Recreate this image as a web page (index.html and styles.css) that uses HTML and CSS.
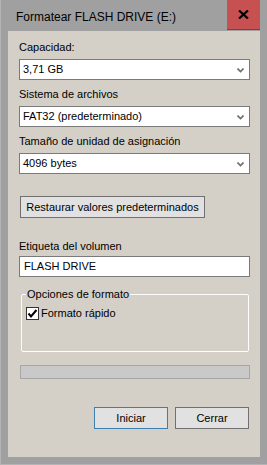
FILE: index.html
```html
<!DOCTYPE html>
<html lang="es">
<head>
<meta charset="utf-8">
<title>Formatear FLASH DRIVE (E:)</title>
<link rel="stylesheet" href="styles.css">
</head>
<body>
<div class="window">
  <div class="titlebar">
    <span class="title">Formatear FLASH DRIVE (E:)</span>
    <span class="close">
      <svg width="11" height="9" viewBox="0 0 11 9"><path d="M1 0.5 L10 8.5 M10 0.5 L1 8.5" stroke="#000" stroke-width="2.2"/></svg>
    </span>
  </div>
  <div class="content">
    <div class="row">
      <div class="label">Capacidad:</div>
      <div class="select"><span>3,71 GB</span><svg class="chev" width="7" height="5" viewBox="0 0 7 5"><path d="M0.5 0.5 L3.5 3.5 L6.5 0.5" fill="none" stroke="#6d6d6d" stroke-width="1.6"/></svg></div>
    </div>
    <div class="row">
      <div class="label">Sistema de archivos</div>
      <div class="select"><span>FAT32 (predeterminado)</span><svg class="chev" width="7" height="5" viewBox="0 0 7 5"><path d="M0.5 0.5 L3.5 3.5 L6.5 0.5" fill="none" stroke="#6d6d6d" stroke-width="1.6"/></svg></div>
    </div>
    <div class="row">
      <div class="label">Tamaño de unidad de asignación</div>
      <div class="select"><span>4096 bytes</span><svg class="chev" width="7" height="5" viewBox="0 0 7 5"><path d="M0.5 0.5 L3.5 3.5 L6.5 0.5" fill="none" stroke="#6d6d6d" stroke-width="1.6"/></svg></div>
    </div>
    <div class="btn restore">Restaurar valores predeterminados</div>
    <div class="label vol">Etiqueta del volumen</div>
    <div class="input">FLASH DRIVE</div>
    <fieldset class="group">
      <legend>Opciones de formato</legend>
      <div class="check">
        <span class="box"><svg width="11" height="11" viewBox="0 0 11 11"><path d="M1.5 5.5 L4 8.5 L9.5 2" fill="none" stroke="#000" stroke-width="2"/></svg></span>
        <span>Formato rápido</span>
      </div>
    </fieldset>
    <div class="progress"></div>
    <div class="actions">
      <div class="btn act default">Iniciar</div>
      <div class="btn act">Cerrar</div>
    </div>
  </div>
</div>
</body>
</html>
```
FILE: styles.css
```css
html, body {
  margin: 0;
  padding: 0;
  background: #a0a0a0;
}
.window {
  width: 267px;
  height: 465px;
  box-sizing: border-box;
  background: #a0a0a0;
  border-left: 1px solid #b4b4b4;
  border-bottom: 1px solid #b4b4b4;
  font-family: "Liberation Sans", Arial, sans-serif;
  font-size: 11px;
  color: #000;
}
.titlebar {
  height: 31px;
  display: flex;
  align-items: flex-start;
  justify-content: space-between;
}
.title {
  font-size: 12px;
  line-height: 16px;
  margin: 9px 0 0 15px;
  color: #000;
}
.close {
  width: 33px;
  height: 29px;
  margin-right: 7px;
  background: #c75050;
  border-bottom: 1px solid #8a3a3a;
  display: flex;
  align-items: center;
  justify-content: center;
}
.content {
  margin: 0 7px 0 7px;
  height: 426px;
  background: #d4d0c8;
  padding: 10px 10px 0 11px;
  box-sizing: border-box;
  display: flex;
  flex-direction: column;
}
.label {
  line-height: 13px;
  height: 13px;
  white-space: nowrap;
}
.row {
  display: flex;
  flex-direction: column;
  gap: 5px;
  margin-bottom: 8px;
}
.select, .input {
  height: 21px;
  box-sizing: border-box;
  background: #fff;
  border: 1px solid #7a7a7a;
  display: flex;
  align-items: center;
  justify-content: space-between;
  padding: 0 5px 0 3px;
  line-height: 13px;
}
.chev {
  margin-top: 1px;
}
.btn {
  box-sizing: border-box;
  height: 22px;
  background: #e1e1e1;
  border: 1px solid #707070;
  display: flex;
  align-items: center;
  justify-content: center;
  line-height: 13px;
  white-space: nowrap;
}
.restore {
  width: 185px;
  margin: 14px 0 0 1px;
}
.vol {
  margin-top: 22px;
}
.input {
  margin-top: 3px;
  height: 21px;
  padding-left: 4px;
}
.group {
  margin: 11px 1px 0 2px;
  padding: 0 6px 0 4px;
  height: 64px;
  box-sizing: border-box;
  border: 1px solid #fdfdfd;
  border-radius: 2px;
}
.group legend {
  padding: 0 1px;
  line-height: 13px;
}
.check {
  display: flex;
  align-items: center;
  gap: 2px;
  margin-top: 6px;
  line-height: 13px;
}
.box {
  width: 13px;
  height: 13px;
  box-sizing: border-box;
  border: 1px solid #333;
  background: #fff;
  display: flex;
  align-items: center;
  justify-content: center;
}
.progress {
  margin: 13px 0 0 1px;
  height: 14px;
  box-sizing: border-box;
  background: #c9c9c9;
  border: 1px solid #a6a6a6;
}
.actions {
  display: flex;
  justify-content: flex-end;
  gap: 7px;
  margin-top: 28px;
  padding-right: 1px;
}
.act {
  width: 74px;
}
.default {
  border-color: #3c7fb1;
}
```
